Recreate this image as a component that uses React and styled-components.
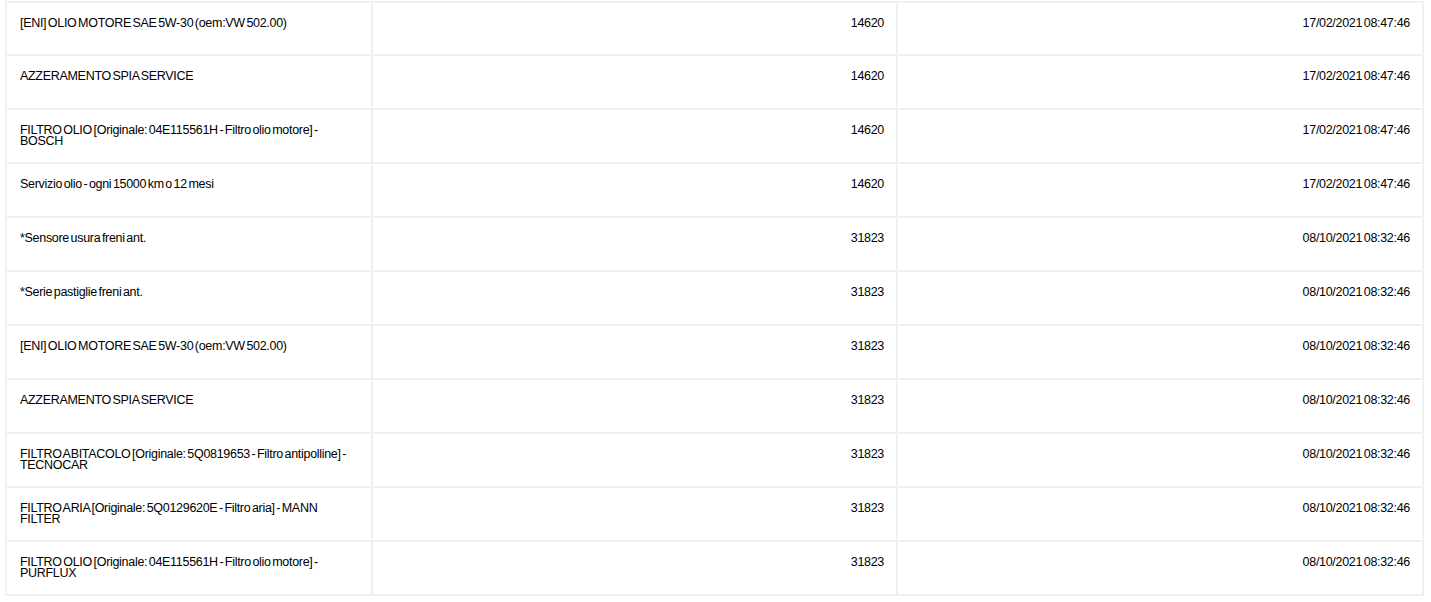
import React from 'react'
import styled, { createGlobalStyle } from 'styled-components'

const GlobalStyle = createGlobalStyle`
  body {
    margin: 0;
    background: #fff;
    font-family: "Liberation Sans", Arial, sans-serif;
    color: #000;
  }
`

const rows = [
  { desc: '[ENI] OLIO MOTORE SAE 5W-30 (oem:VW 502.00)', km: '14620', date: '17/02/2021 08:47:46' },
  { desc: 'AZZERAMENTO SPIA SERVICE', km: '14620', date: '17/02/2021 08:47:46' },
  { desc: 'FILTRO OLIO [Originale: 04E115561H - Filtro olio motore] - BOSCH', km: '14620', date: '17/02/2021 08:47:46' },
  { desc: 'Servizio olio - ogni 15000 km o 12 mesi', km: '14620', date: '17/02/2021 08:47:46' },
  { desc: '*Sensore usura freni ant.', km: '31823', date: '08/10/2021 08:32:46' },
  { desc: '*Serie pastiglie freni ant.', km: '31823', date: '08/10/2021 08:32:46' },
  { desc: '[ENI] OLIO MOTORE SAE 5W-30 (oem:VW 502.00)', km: '31823', date: '08/10/2021 08:32:46' },
  { desc: 'AZZERAMENTO SPIA SERVICE', km: '31823', date: '08/10/2021 08:32:46' },
  { desc: 'FILTRO ABITACOLO [Originale: 5Q0819653 - Filtro antipolline] - TECNOCAR', km: '31823', date: '08/10/2021 08:32:46' },
  { desc: 'FILTRO ARIA [Originale: 5Q0129620E - Filtro aria] - MANN FILTER', km: '31823', date: '08/10/2021 08:32:46' },
  { desc: 'FILTRO OLIO [Originale: 04E115561H - Filtro olio motore] - PURFLUX', km: '31823', date: '08/10/2021 08:32:46' },
]

const Wrapper = styled.div`
  padding: 1px 0 0 5px;
`

const Table = styled.table`
  width: 1417px;
  border-collapse: collapse;
  table-layout: fixed;
  border: 2px solid #f0f0f0;
`

const Col = styled.col`
  width: ${p => p.$w}px;
`

const Cell = styled.td`
  border: 2px solid #f0f0f0;
  height: 22px;
  padding: 15px 12px 15px 13px;
  vertical-align: top;
  font-size: 12.5px;
  line-height: 11px;
  letter-spacing: -0.3px;
  word-spacing: -1.6px;
  text-align: ${p => (p.$right ? 'right' : 'left')};

  &:first-child {
    padding-right: 16px;
  }
`

const Row = styled.tr`
  &:first-child ${Cell} {
    height: 21px;
  }
`

export default function App() {
  return (
    <>
      <GlobalStyle />
      <Wrapper>
        <Table>
          <colgroup>
            <Col $w={366} />
            <Col $w={525} />
            <Col $w={526} />
          </colgroup>
          <tbody>
            {rows.map((r, i) => (
              <Row key={i}>
                <Cell>{r.desc}</Cell>
                <Cell $right>{r.km}</Cell>
                <Cell $right>{r.date}</Cell>
              </Row>
            ))}
          </tbody>
        </Table>
      </Wrapper>
    </>
  )
}
